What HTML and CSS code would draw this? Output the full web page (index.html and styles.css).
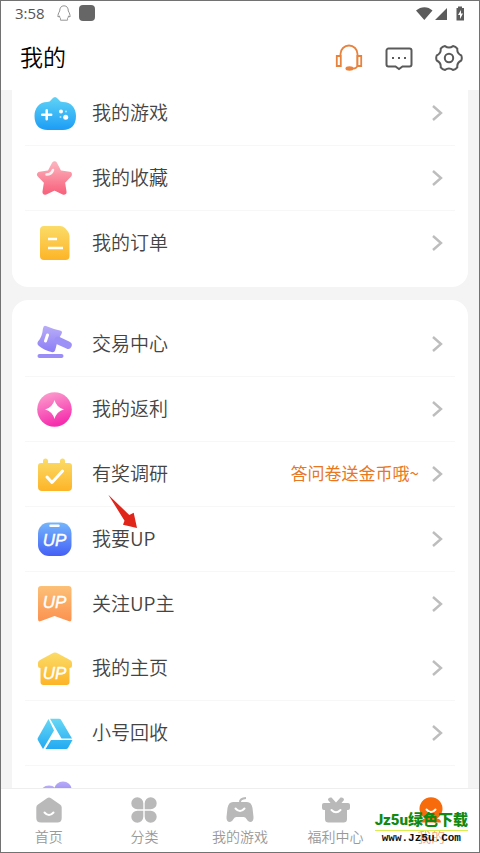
FILE: index.html
```html
<!DOCTYPE html>
<html lang="zh-CN">
<head>
<meta charset="utf-8">
<meta name="viewport" content="width=device-width, initial-scale=1">
<title>我的</title>
<link rel="stylesheet" href="styles.css">
</head>
<body>
<svg class="defs" aria-hidden="true">
  <defs>
    <linearGradient id="blue" x1="0" y1="0" x2="0" y2="1"><stop offset="0" stop-color="#5fd3f6"/><stop offset="1" stop-color="#1c9df5"/></linearGradient>
    <linearGradient id="cyan" gradientUnits="userSpaceOnUse" x1="0" y1="6" x2="0" y2="37"><stop offset="0" stop-color="#6ad8f4"/><stop offset="1" stop-color="#22aaf2"/></linearGradient>
    <linearGradient id="pink" x1="0" y1="0" x2="0" y2="1"><stop offset="0" stop-color="#fbb0bb"/><stop offset="1" stop-color="#f8657f"/></linearGradient>
    <linearGradient id="gold" x1="0" y1="0" x2="0" y2="1"><stop offset="0" stop-color="#fbdc68"/><stop offset="1" stop-color="#fdb427"/></linearGradient>
    <linearGradient id="violet" x1="0" y1="0" x2="0" y2="1"><stop offset="0" stop-color="#b9adf8"/><stop offset="1" stop-color="#8b7df5"/></linearGradient>
    <linearGradient id="magenta" x1="0" y1="0" x2="0.3" y2="1"><stop offset="0" stop-color="#fba6cf"/><stop offset="1" stop-color="#f62fae"/></linearGradient>
    <linearGradient id="indigo" x1="0" y1="0" x2="0" y2="1"><stop offset="0" stop-color="#74b6fb"/><stop offset="1" stop-color="#4560f6"/></linearGradient>
    <linearGradient id="orange" x1="0" y1="0" x2="0" y2="1"><stop offset="0" stop-color="#fcc077"/><stop offset="1" stop-color="#fb9250"/></linearGradient>
    <symbol id="chevron" viewBox="0 0 12 18"><path d="M2 2l8 7-8 7" fill="none" stroke="#bdbdbd" stroke-width="2.4"/></symbol>
  </defs>
</svg>

<div class="app">
  <div class="status">
    <span class="time">3:58</span>
    <svg class="penguin" width="14" height="16" viewBox="0 0 14 16"><path d="M7 .8C4 .8 2.700 3 2.700 6 1.500 8 .7 10 1 12l1.500-1c.2 1.500.6 2.200 1.500 3-.8.3-1 1-.5 1.200H7h3.500c.5-.2.3-.9-.5-1.200.9-.8 1.300-1.500 1.500-3l1.500 1c.3-2-.5-4-1.700-6 0-3-1.300-5.200-4.300-5.200z" fill="#fff" stroke="#888" stroke-width=".9"/></svg>
    <span class="square"></span>
    <svg class="signals" width="50" height="16" viewBox="0 0 50 16" fill="#5c5c5c"><path d="M1 5.500C6 1 13 1 17.500 5.500L9.300 15zM32 3v12H20z"/><path d="M43 1.500h4V3h2v12.500h-7.500V3H43z"/><path d="M46 5l-3 5h2v4l3-5.500h-2z" fill="#fff"/></svg>
  </div>

  <header class="header">
    <h1 class="title">我的</h1>
    <div class="actions">
      <button class="action" aria-label="客服"><svg width="28" height="28" viewBox="0 0 28 28" fill="none" stroke="#e8833e" stroke-width="1.800"><path d="M5.500 11V10a8.500 8.500 0 0 1 17 0v11c0 2.500-2 3.500-5 3.700M1.800 12h4v10h-4zM22.200 12h4v10h-4z"/><ellipse cx="14.500" cy="24.500" rx="4" ry="2.200" fill="#e8833e" stroke="none"/></svg></button>
      <button class="action" aria-label="消息"><svg width="28" height="28" viewBox="0 0 28 28" fill="none" stroke="#5a5a5a" stroke-width="2"><path d="M3.500 4.500h21a2 2 0 0 1 2 2v14a2 2 0 0 1-2 2h-7L14 25l-3.500-2.500h-7a2 2 0 0 1-2-2v-14a2 2 0 0 1 2-2z"/><path d="M7 14h2M13 14h2M19 14h2"/></svg></button>
      <button class="action" aria-label="设置"><svg width="28" height="28" viewBox="0 0 28 28" fill="none" stroke="#5a5a5a" stroke-width="2" stroke-linejoin="round"><path d="M26.300 11.500Q27.300 14 26.300 16.500Q21.800 18.500 22.300 23.400Q20.600 25.500 18 25.900Q14 23 10 25.900Q7.400 25.500 5.700 23.400Q6.200 18.500 1.700 16.500Q.7 14 1.700 11.500Q6.200 9.500 5.700 4.600Q7.400 2.500 10 2.100Q14 5 18 2.100Q20.600 2.500 22.300 4.600Q21.800 9.500 26.300 11.500z"/><circle cx="14" cy="14" r="4.200"/></svg></button>
    </div>
  </header>

  <main class="main">
    <div class="list">
      <section class="card">
        <a class="row" href="#"><svg class="icon" viewBox="0 0 42 42"><path d="M13 10q3 0 4.500-2.500Q21 2.500 24.500 7.500 26 10 29 10c8 0 13 6 13 14 0 9-5 14-13 14H13.500C5.500 38 .5 33 .5 24 .5 16 5.500 10 13 10z" fill="url(#blue)"/><path d="M12.700 18.200v9M8.200 22.700h9" stroke="#fff" stroke-width="2.500" stroke-linecap="round"/><circle cx="27" cy="19.500" r="2" fill="#fff"/><circle cx="31.700" cy="25.300" r="2.500" fill="#fff"/><circle cx="26.500" cy="25" r="1" fill="#fff" opacity=".6"/><circle cx="32" cy="19.500" r="1" fill="#fff" opacity=".6"/></svg><span class="label">我的游戏</span><svg class="chevron"><use href="#chevron"/></svg></a>
        <a class="row" href="#"><svg class="icon" viewBox="0 0 42 42"><path d="M20.500 7l4.700 9 10 1.500-7 7.300 1.600 10.200-9.300-4.500-9.300 4.500 1.600-10.200-7-7.300 10-1.500z" fill="url(#pink)" stroke="url(#pink)" stroke-width="5.500" stroke-linejoin="round"/><path d="M12.500 17.500q5 0 6.500-4.500" fill="none" stroke="#fff" stroke-width="2.500" stroke-linecap="round" opacity=".85"/></svg><span class="label">我的收藏</span><svg class="chevron"><use href="#chevron"/></svg></a>
        <a class="row" href="#"><svg class="icon" viewBox="0 0 42 42"><path d="M10 4h16q3 0 5 2l2.500 3q2 2 2 5v20q0 4-4 4H10q-4 0-4-4V8q0-4 4-4z" fill="url(#gold)"/><path d="M14 17h9M14 26h15" stroke="#fff" stroke-width="2.500"/></svg><span class="label">我的订单</span><svg class="chevron"><use href="#chevron"/></svg></a>
      </section>

      <section class="card">
        <a class="row" href="#"><svg class="icon" viewBox="0 0 42 42"><path d="M12 3q7 3 14 4.500 3 .5 1.500 3.500-4 6-6 15-1 4-4 3-7-1.500-12.500-6-2.500-2-1-4.500 4-4 5-13 .5-3.500 3-2.500z" fill="url(#violet)"/><path d="M24 17.500l10 4.700" stroke="#9d91f7" stroke-width="7.500" stroke-linecap="round"/><path d="M5.500 33h22" stroke="#9a8df7" stroke-width="4" stroke-linecap="round"/><path d="M13.500 12l-2 6" stroke="#fff" stroke-width="3" stroke-linecap="round"/></svg><span class="label">交易中心</span><svg class="chevron"><use href="#chevron"/></svg></a>
        <a class="row" href="#"><svg class="icon" viewBox="0 0 42 42"><circle cx="20.500" cy="21.500" r="17.300" fill="url(#magenta)"/><path d="M20.500 12q2 7.500 9.500 9.500-7.500 2-9.500 9.500-2-7.500-9.500-9.500 7.500-2 9.500-9.500z" fill="#fff"/></svg><span class="label">我的返利</span><svg class="chevron"><use href="#chevron"/></svg></a>
        <a class="row" href="#"><svg class="icon" viewBox="0 0 42 42"><path d="M9 10V8q0-2.500 2.500-2.500T14 8v2h12V8q0-2.500 2.500-2.500T31 8v2h4q3 0 3 3v21q0 4-4 4H8q-4 0-4-4V13q0-3 3-3z" fill="url(#gold)"/><path d="M13 24l5 5.500L28.500 18" fill="none" stroke="#fff" stroke-width="3" stroke-linecap="round" stroke-linejoin="round"/></svg><span class="label">有奖调研</span><span class="note">答问卷送金币哦~</span><svg class="chevron"><use href="#chevron"/></svg></a>
        <a class="row" href="#"><svg class="icon" viewBox="0 0 42 42"><rect x="4" y="4.500" width="33.500" height="33.500" rx="11" fill="url(#indigo)"/><path d="M16.500 7.700h8" stroke="#fff" stroke-width="2.500" stroke-linecap="round"/><text class="up" x="20.500" y="28">UP</text></svg><span class="label">我要UP</span><svg class="chevron"><use href="#chevron"/></svg>
          <svg class="pointer" width="30" height="35" viewBox="0 0 30 35"><path d="M.3.700L21.300 21 25.700 18.700 29 34 15 30.700 16.500 26.700z" fill="#e0251b"/></svg></a>
        <a class="row plain" href="#"><svg class="icon" viewBox="0 0 42 42"><path d="M7 3h27.500q3 0 3 3v30q0 3.500-3 2L20.500 33 7 38q-3 1.500-3-2V6q0-3 3-3z" fill="url(#orange)"/><text class="up" x="20.500" y="25">UP</text></svg><span class="label">关注UP主</span><svg class="chevron"><use href="#chevron"/></svg></a>
        <a class="row" href="#"><svg class="icon" viewBox="0 0 42 42"><path d="M18 6.500q3-2 6 0L36 13q2 1 2 3v3q0 2-2.500 2v14q0 3-3 3h-23q-3 0-3-3V21Q4 21 4 19v-3q0-2 2-3z" fill="url(#gold)"/><text class="up" x="20.500" y="32">UP</text></svg><span class="label">我的主页</span><svg class="chevron"><use href="#chevron"/></svg></a>
        <a class="row" href="#"><svg class="icon" viewBox="0 0 42 42" fill="url(#cyan)"><path d="M14.500 7L3.800 26q-.5 1 0 2L9 37 20 18.500z"/><path d="M16 6.700h9q1.500 0 2 1l11 18.800H27.500z"/><path d="M17 28h21.500L34 36q-.6 1-2 1H11.500z"/></svg><span class="label">小号回收</span><svg class="chevron"><use href="#chevron"/></svg></a>
        <a class="row" href="#"><svg class="icon" viewBox="0 0 42 42" fill="url(#violet)"><ellipse cx="29" cy="12" rx="8.500" ry="7.500"/><ellipse cx="15" cy="17" rx="9" ry="8.500"/></svg></a>
      </section>
    </div>
  </main>

  <nav class="tabs">
    <a class="tab" href="#"><svg width="28" height="26" viewBox="0 0 28 26"><path d="M12 1.200q2-1.500 4 0l9 6.300q1.700 1.200 1.700 3V21q0 4.500-4.500 4.500H6Q1.300 25.500 1.300 21V10.500q0-1.800 1.700-3z"/><path class="smile" d="M9.500 15.500q4.500 5 9 0"/></svg><span>首页</span></a>
    <a class="tab" href="#"><svg width="28" height="26" viewBox="0 0 28 26"><path d="M13.300 12.300H7.300a6 6 0 1 1 6-6zM14.700 12.300h6a6 6 0 1 0-6-6zM13.300 13.700H7.300a6 6 0 1 0 6 6zM14.700 13.700h6a6 6 0 1 1-6 6z"/></svg><span>分类</span></a>
    <a class="tab" href="#"><svg width="28" height="26" viewBox="0 0 28 26"><path d="M7 5h14q4.500 0 5.500 6l1 9q.3 5-3.500 5-2 0-3.500-3-1-2-3-2h-7q-2 0-3 2-1.500 3-3.500 3-3.800 0-3.500-5l1-9Q2.500 5 7 5z"/><path d="M14 5.500q-.5-4 6-4.500" fill="none" stroke="#b9b9b9" stroke-width="2"/><path class="smile" d="M9.500 11.500q4.500 5 9 0"/></svg><span>我的游戏</span></a>
    <a class="tab" href="#"><svg width="28" height="26" viewBox="0 0 28 26"><path d="M2 6h6.500L6 3Q6 0 9.500 .5L14 5.500 18.500 .5Q22 0 22 3L19.500 6H26q2 0 2 2v3q0 2-2 2h-1v9q0 3.500-3.500 3.500h-15Q3 25.500 3 22v-9H2q-2 0-2-2V8q0-2 2-2z"/><path class="smile" d="M9.500 13q4.500 4.500 9 0"/></svg><span>福利中心</span></a>
    <a class="tab active" href="#"><svg width="28" height="26" viewBox="0 0 28 26"><path d="M8 21.500a11.500 11.500 0 1 1 12 0q4 .5 4 4H4q0-3.500 4-4z"/><path class="smile" d="M9.500 12.500q4.500 5 9 0"/></svg><span>我的</span></a>
  </nav>

  <div class="watermark"><span class="brand">Jz5u绿色下载</span><span class="site">www.Jz5u.Com</span></div>
</div>
</body>
</html>
```
FILE: styles.css
```css
* { box-sizing: border-box; }

body {
  margin: 0;
  background: #fff;
  color: #444;
  font-family: Roboto, "Noto Sans CJK SC", sans-serif;
}

.defs { position: absolute; width: 0; height: 0; }

.app {
  position: relative;
  display: flex;
  flex-direction: column;
  height: 100vh;
  border: 1px solid #727272;
  overflow: hidden;
}

.status {
  display: flex;
  align-items: center;
  height: 24px;
  flex: none;
  padding: 0 14px;
  color: #555;
}
.time { font: 15px/24px "Open Sans", sans-serif; }
.penguin { margin-left: 12px; }
.square { width: 16px; height: 16px; margin-left: 8px; border-radius: 4px; background: #666; }
.signals { margin-left: auto; }

.header {
  display: flex;
  align-items: center;
  justify-content: space-between;
  height: 65px;
  flex: none;
  padding: 0 16px 0 19px;
}
.title { margin: 0; padding-bottom: 4px; font: 350 23px/32px "Noto Sans CJK SC", sans-serif; color: #000; }
.actions { display: flex; gap: 22px; }
.action { display: flex; padding: 0; border: 0; background: none; }

.main { flex: 1; min-height: 0; overflow: hidden; background: #f4f4f4; }

/* The list is shown scrolled part of the way past the header. */
.list { display: flex; flex-direction: column; gap: 13px; margin-top: -21px; padding: 0 11px; }
.card { padding: 12px 13px; border-radius: 16px; background: #fff; }

.row {
  position: relative;
  display: flex;
  align-items: center;
  height: 65px;
  padding: 0 12px 0 9px;
  border-bottom: 1px solid #f7f7f7;
  color: #444;
  text-decoration: none;
}
.row.plain { height: 64px; border-bottom: 0; }
.row:last-child { height: 64px; border-bottom: 0; }
.icon { width: 42px; height: 42px; flex: none; }
.label { margin-left: 16px; padding-bottom: 2px; font: 350 19px/28px "Noto Sans CJK SC", sans-serif; }
.note { margin-left: auto; padding-bottom: 2px; font: 17px/24px "Noto Sans CJK SC", sans-serif; color: #e87722; }
.chevron { width: 12px; height: 18px; flex: none; margin-left: auto; }
.note + .chevron { margin-left: 12px; }
.up { font: italic 400 17px "Liberation Sans", sans-serif; fill: #fff; stroke: #fff; stroke-width: 0.4; text-anchor: middle; }
.pointer { position: absolute; left: 83px; top: -13px; }

.tabs {
  display: flex;
  flex: none;
  height: 64px;
  border-top: 1px solid #eee;
  background: #fff;
}
.tab {
  flex: 1;
  display: flex;
  flex-direction: column;
  align-items: center;
  gap: 4px;
  padding-top: 8px;
  font-size: 14px;
  line-height: 20px;
  color: #999;
  font-weight: 350;
  text-decoration: none;
  fill: #b9b9b9;
}
.tab.active { color: #f6a984; fill: #f76b0c; }
.smile { fill: none; stroke: #fff; stroke-width: 2; stroke-linecap: round; }

.watermark {
  position: absolute;
  right: 11px;
  bottom: 7px;
  display: flex;
  flex-direction: column;
  align-items: center;
  white-space: nowrap;
}
.brand {
  border-bottom: 1px solid #d9ee4e;
  font: 900 15px/20px Roboto, "Noto Sans CJK SC", sans-serif;
  color: #128a12;
}
.site { font: 700 11px/14px "Liberation Mono", monospace; color: #111; }
```
